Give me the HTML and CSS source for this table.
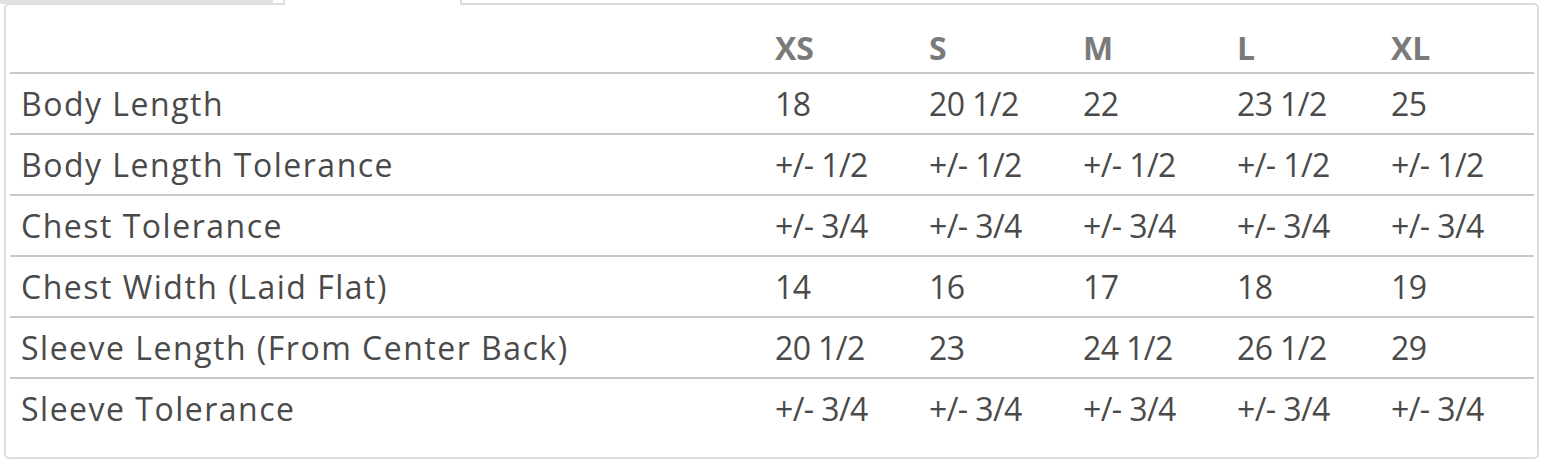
FILE: index.html
```html
<!DOCTYPE html>
<html>
<head>
<meta charset="utf-8">
<link rel="stylesheet" href="styles.css">
</head>
<body>
<div class="tabs">
  <div class="tab tab-inactive"></div>
  <div class="tab tab-gap"></div>
  <div class="tab tab-active"></div>
</div>
<div class="panel">
  <table class="sizes">
    <colgroup>
      <col class="c-label">
      <col class="c-size"><col class="c-size"><col class="c-size"><col class="c-size"><col class="c-size">
    </colgroup>
    <thead>
      <tr><th></th><th>XS</th><th>S</th><th>M</th><th>L</th><th>XL</th></tr>
    </thead>
    <tbody>
      <tr><td class="label">Body Length</td><td>18</td><td>20 1/2</td><td>22</td><td>23 1/2</td><td>25</td></tr>
      <tr><td class="label">Body Length Tolerance</td><td>+/- 1/2</td><td>+/- 1/2</td><td>+/- 1/2</td><td>+/- 1/2</td><td>+/- 1/2</td></tr>
      <tr><td class="label">Chest Tolerance</td><td>+/- 3/4</td><td>+/- 3/4</td><td>+/- 3/4</td><td>+/- 3/4</td><td>+/- 3/4</td></tr>
      <tr><td class="label">Chest Width (Laid Flat)</td><td>14</td><td>16</td><td>17</td><td>18</td><td>19</td></tr>
      <tr><td class="label">Sleeve Length (From Center Back)</td><td>20 1/2</td><td>23</td><td>24 1/2</td><td>26 1/2</td><td>29</td></tr>
      <tr><td class="label">Sleeve Tolerance</td><td>+/- 3/4</td><td>+/- 3/4</td><td>+/- 3/4</td><td>+/- 3/4</td><td>+/- 3/4</td></tr>
    </tbody>
  </table>
</div>
</body>
</html>
```

FILE: styles.css
```css
html, body {
  margin: 0;
  padding: 0;
  background: #ffffff;
}

body {
  font-family: "Open Sans", "Liberation Sans", sans-serif;
  color: #4a4a4a;
}

.tabs {
  display: flex;
  height: 5px;
  position: relative;
  z-index: 1;
  margin-bottom: -2px;
}

.tab {
  height: 5px;
  box-sizing: border-box;
}

.tab-inactive {
  width: 273px;
  height: 4px;
  background: #e1e1e1;
}

.tab-gap {
  width: 12px;
  border-right: 2px solid #dcdcdc;
  height: 4px;
}

.tab-active {
  width: 177px;
  background: #ffffff;
  border-right: 2px solid #dcdcdc;
}

.panel {
  margin-left: 4px;
  width: 1535px;
  box-sizing: border-box;
  border: 2px solid #dcdcdc;
  border-radius: 5px;
  padding: 0 3px 19px 4px;
}

.sizes {
  border-collapse: collapse;
  table-layout: fixed;
  width: 1524px;
  font-size: 32px;
  line-height: 43px;
}

.c-label { width: 754px; }
.c-size { width: 154px; }

.sizes th,
.sizes td {
  text-align: left;
  padding: 8px 11px;
  white-space: nowrap;
}

.sizes th {
  font-weight: 700;
  color: #7a7a7a;
  padding: 21px 11px 3px;
}

.sizes td {
  font-weight: 400;
  border-top: 2px solid #c8c8c8;
  letter-spacing: -0.6px;
}

.sizes td.label {
  letter-spacing: 1.5px;
}
```
